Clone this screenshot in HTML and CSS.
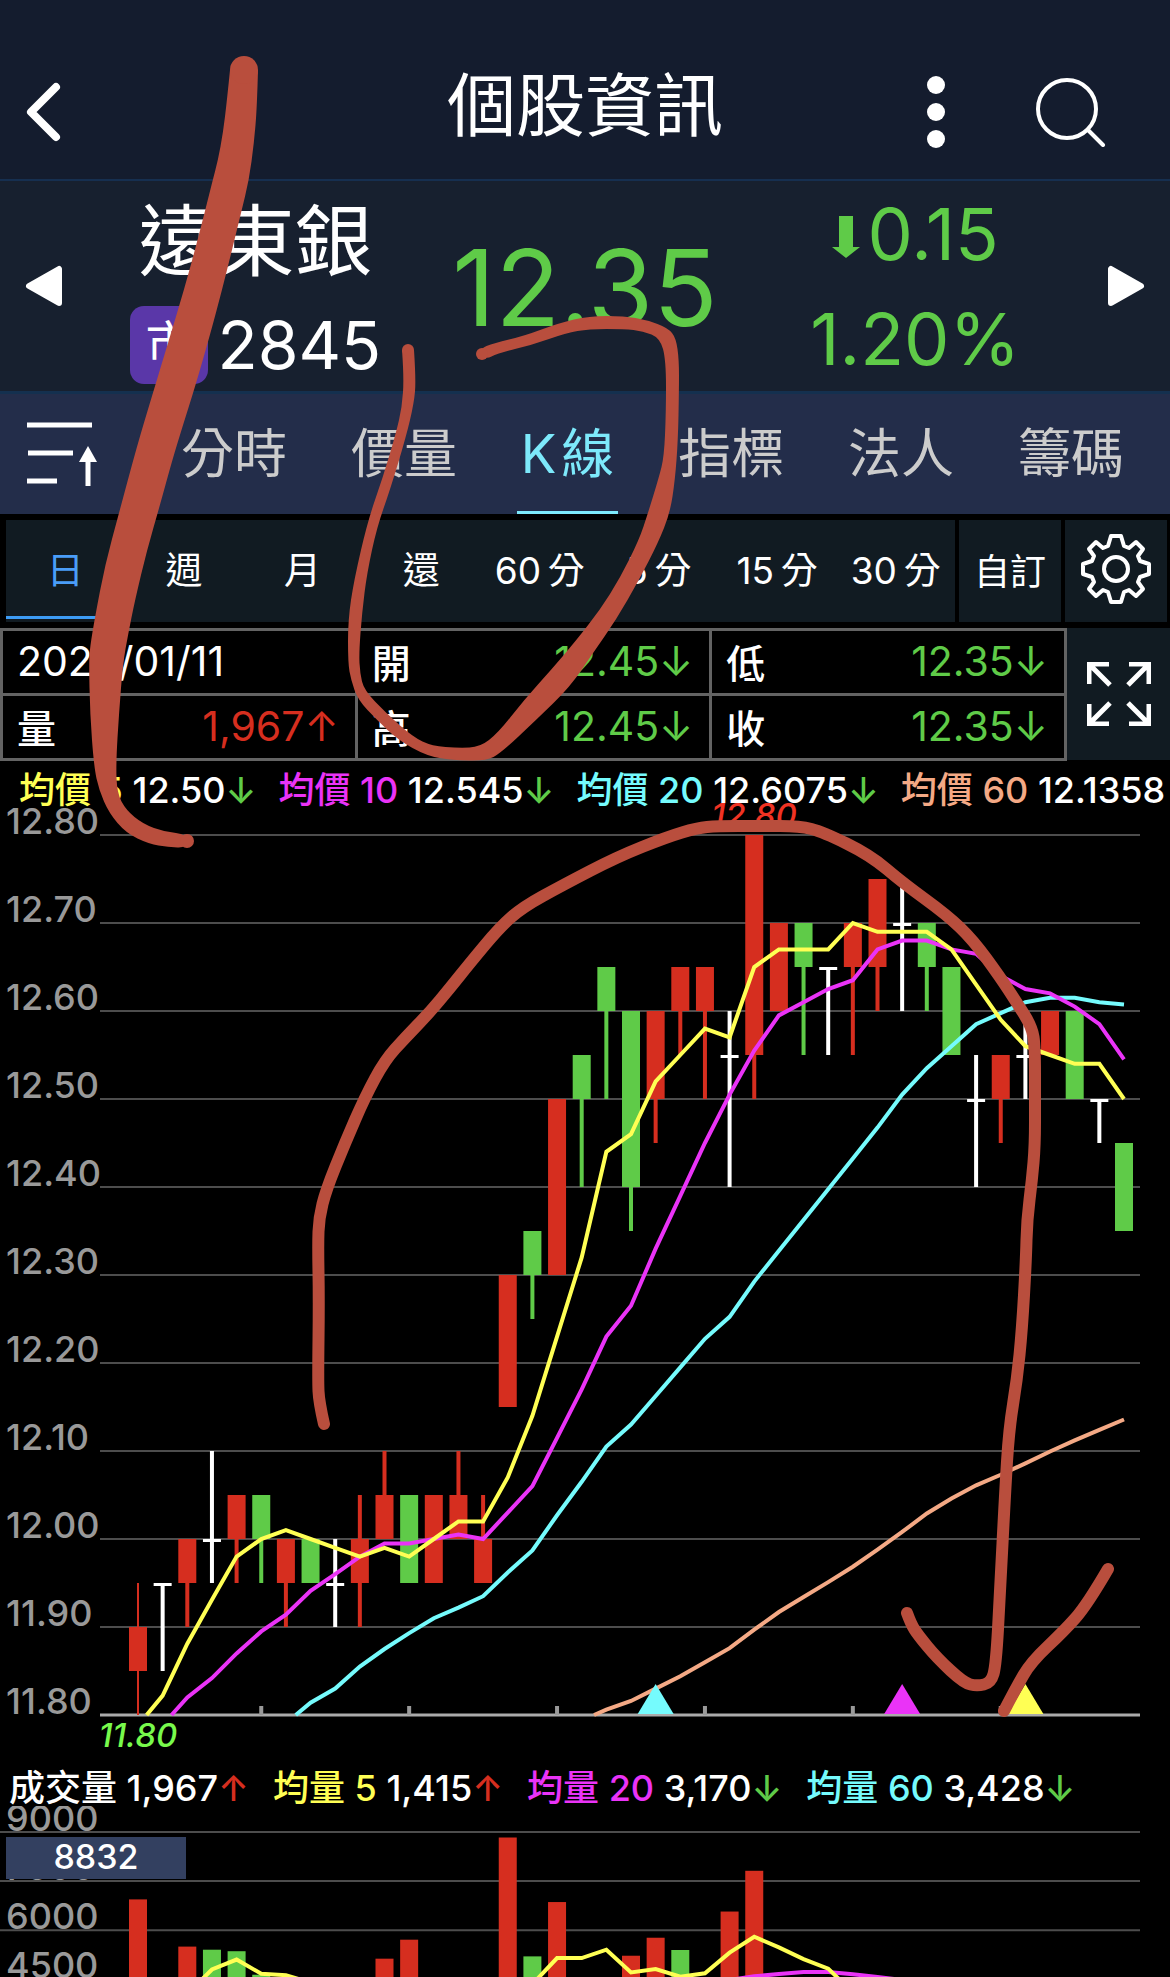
FILE: index.html
```html
<!DOCTYPE html>
<html lang="zh-Hant">
<head>
    <meta charset="utf-8">
    <meta name="viewport" content="width=device-width, initial-scale=1">
    <title>個股資訊</title>
    <link rel="stylesheet" href="styles.css">
</head>
<body>
    <div class="page">
        <header class="topbar">
            <button class="icon-btn" aria-label="返回">
                <svg width="36" height="60" viewBox="0 0 36 60"><path d="M30 5 L5 30 L30 55" fill="none" stroke="#fff" stroke-width="8" stroke-linecap="round" stroke-linejoin="round"/></svg>
            </button>
            <h1>個股資訊</h1>
            <div class="topbar-actions">
                <button class="icon-btn" aria-label="更多">
                    <svg width="18" height="72" viewBox="0 0 18 72" fill="#fff"><circle cx="9" cy="9" r="9"/><circle cx="9" cy="36" r="9"/><circle cx="9" cy="63" r="9"/></svg>
                </button>
                <button class="icon-btn" aria-label="搜尋">
                    <svg width="70" height="70" viewBox="0 0 70 70" fill="none" stroke="#fff" stroke-width="4" stroke-linecap="round"><circle cx="31" cy="32" r="29"/><path d="M52 53 L67 68"/></svg>
                </button>
            </div>
        </header>

        <section class="quote">
            <button class="icon-btn" aria-label="上一檔">
                <svg width="38" height="42" viewBox="0 0 38 42"><path d="M4 21 L34 4 V38 Z" fill="#fff" stroke="#fff" stroke-width="6" stroke-linejoin="round"/></svg>
            </button>
            <div class="stock">
                <div class="stock-name">遠東銀</div>
                <div class="stock-code"><span class="market">市</span>2845</div>
            </div>
            <div class="price">12.35</div>
            <div class="change">
                <div class="change-line"><svg width="28" height="48" viewBox="0 0 28 48"><path d="M7 6 H21 V37 H28 L14 48 L0 37 H7 Z" fill="#5fcb48"/></svg>0.15</div>
                <div class="change-line">1.20%</div>
            </div>
            <button class="icon-btn" aria-label="下一檔">
                <svg width="38" height="42" viewBox="0 0 38 42"><path d="M34 21 L4 4 V38 Z" fill="#fff" stroke="#fff" stroke-width="6" stroke-linejoin="round"/></svg>
            </button>
        </section>

        <nav class="tabs">
            <button class="icon-btn" aria-label="排序">
                <svg width="72" height="64" viewBox="0 0 72 64" fill="none" stroke="#fff" stroke-width="5"><path d="M0 3 H65 M1 31 H46 M0 59 H30 M61 64 V36"/><path d="M61 24 L70 40 H52 Z" fill="#fff" stroke="none"/></svg>
            </button>
            <div class="tab-list">
                <button class="tab">分時</button>
                <button class="tab">價量</button>
                <button class="tab active">K&#8202;線</button>
                <button class="tab">指標</button>
                <button class="tab">法人</button>
                <button class="tab">籌碼</button>
            </div>
        </nav>

        <div class="periods">
            <div class="period-list">
                <button class="period active">日</button>
                <button class="period">週</button>
                <button class="period">月</button>
                <button class="period">還</button>
                <button class="period">60&#8201;分</button>
                <button class="period">5&#8201;分</button>
                <button class="period">15&#8201;分</button>
                <button class="period">30&#8201;分</button>
            </div>
            <button class="period-btn">自訂</button>
            <button class="period-btn" aria-label="設定">
                <svg width="72" height="72" viewBox="-36 -36 72 72" fill="none" stroke="#fff" stroke-width="4" stroke-linejoin="round">
                    <circle r="12"/>
                    <path d="M-5 -33 H5 L8 -23 L13 -21 L20 -27 L27 -20 L22 -13 L24 -8 L33 -5 V5 L24 8 L22 13 L27 20 L20 27 L13 21 L8 23 L5 33 H-5 L-8 23 L-13 21 L-20 27 L-27 20 L-22 13 L-24 8 L-33 5 V-5 L-24 -8 L-22 -13 L-27 -20 L-20 -27 L-13 -21 L-8 -23 Z"/>
                </svg>
            </button>
        </div>

        <div class="summary">
            <div class="summary-data">
                <table>
                    <tr>
                        <td><div class="cell">2024/01/11</div></td>
                        <td><div class="cell"><b>開</b><span class="down">12.45↓</span></div></td>
                        <td><div class="cell"><b>低</b><span class="down">12.35↓</span></div></td>
                    </tr>
                    <tr>
                        <td><div class="cell"><b>量</b><span class="up">1,967↑</span></div></td>
                        <td><div class="cell"><b>高</b><span class="down">12.45↓</span></div></td>
                        <td><div class="cell"><b>收</b><span class="down">12.35↓</span></div></td>
                    </tr>
                </table>
            </div>
            <button class="expand" aria-label="全螢幕">
                <svg width="64" height="64" viewBox="0 0 64 64" fill="none" stroke="#fff" stroke-width="5"><path d="M22 2 H2 V22 M2 2 L23 23 M42 2 H62 V22 M62 2 L41 23 M2 42 V62 H22 M2 62 L23 41 M62 42 V62 H42 M62 62 L41 41"/></svg>
            </button>
        </div>

        <div class="legend legend-price">
            <span><i class="c-yellow">均價 5</i> 12.50<em class="down">↓</em></span>
            <span><i class="c-magenta">均價 10</i> 12.545<em class="down">↓</em></span>
            <span><i class="c-cyan">均價 20</i> 12.6075<em class="down">↓</em></span>
            <span><i class="c-orange">均價 60</i> 12.1358</span>
        </div>
        <svg class="chart chart-price" id="price-chart" viewBox="0 0 1170 945"></svg>

        <div class="legend legend-volume">
            <span>成交量 1,967<em class="up">↑</em></span>
            <span><i class="c-yellow">均量 5</i> 1,415<em class="up">↑</em></span>
            <span><i class="c-magenta">均量 20</i> 3,170<em class="down">↓</em></span>
            <span><i class="c-cyan">均量 60</i> 3,428<em class="down">↓</em></span>
        </div>
        <svg class="chart" id="volume-chart" viewBox="0 0 1170 171"></svg>

        <svg class="marker" id="marker" viewBox="0 0 1170 1977" aria-hidden="true"></svg>
    </div>
    <script src="script.js"></script>
</body>
</html>
```

FILE: styles.css
```css
* { box-sizing: border-box; }
body { margin: 0; background: #000; color: #fff; font-family: Inter, "Noto Sans CJK TC", sans-serif; }
button { background: none; border: none; padding: 0; color: inherit; font: inherit; cursor: pointer; }
svg { display: block; }
.page { position: relative; overflow: hidden; }

.up { color: #d62e1f; }
.down { color: #5fcb48; }
.c-yellow { color: #ffff54; }
.c-magenta { color: #ea33f7; }
.c-cyan { color: #75fbfd; }
.c-orange { color: #f4a985; }

.topbar { display: grid; grid-template-columns: 1fr auto 1fr; align-items: center; height: 181px; padding: 44px 64px 0 26px; background: #141c2e; border-bottom: 2px solid #162f50; }
.topbar h1 { margin: 0 0 12px 38px; font-size: 69px; line-height: 80px; font-weight: 400; }
.topbar-actions { display: flex; justify-content: flex-end; align-items: center; gap: 91px; }

.quote { display: grid; grid-template-columns: 38px 4fr 3fr 4fr 38px; align-items: center; justify-items: center; height: 210px; padding: 0 25px; background: #17202f; }
.stock { padding-left: 6px; }
.stock-name { padding-left: 8px; font-size: 78px; line-height: 108px; }
.stock-code { display: flex; align-items: center; gap: 9px; height: 88px; padding-top: 10px; font-size: 66px; line-height: 80px; }
.market { width: 78px; height: 78px; border-radius: 14px; background: #5a37a8; font-size: 48px; line-height: 76px; text-align: center; }
.price { padding-top: 4px; color: #5fcb48; font-size: 106px; line-height: 106px; }
.change { color: #5fcb48; font-size: 72px; }
.change-line { display: flex; align-items: center; justify-content: center; gap: 8px; padding-right: 4px; line-height: 105px; }

.tabs { display: flex; align-items: center; gap: 78px; height: 123px; padding: 0 42px 0 27px; background: #232d4a; border-top: 3px solid #14304f; }
.tab-list { display: flex; flex: 1; justify-content: space-between; height: 120px; }
.tab { padding: 0 4px 6px; border-bottom: 3px solid transparent; color: #ccc; font-size: 53px; }
.tab.active { color: #7de9fb; border-color: #7de9fb; }

.periods { display: flex; gap: 4px; height: 102px; margin: 6px 3px 6px 6px; }
.period-list { display: flex; flex: 1; background: #111b22; }
.period { flex: 1; margin-bottom: 3px; border-bottom: 3px solid transparent; font-size: 37px; white-space: nowrap; }
.period.active { color: #4a9df8; border-color: #3d9cf5; }
.period-btn { display: flex; align-items: center; justify-content: center; width: 102px; padding-bottom: 5px; background: #111b22; font-size: 36px; }

.summary { display: flex; height: 132px; }
.summary-data { flex: 1; }
.summary table { width: 100%; border-collapse: collapse; table-layout: fixed; }
.summary td { padding: 0; border: 3px solid #636363; }
.cell { display: flex; align-items: center; justify-content: space-between; height: 62px; padding: 0 16px 2px 14px; font-size: 41px; }
.cell b { font-size: 39px; font-weight: 500; }
.expand { display: flex; align-items: center; justify-content: center; width: 103px; background: #111b22; }

.legend { position: relative; z-index: 1; display: flex; font-size: 36px; font-weight: 500; white-space: nowrap; }
.legend i, .legend em { font-style: normal; }
.legend-price { gap: 22px; height: 55px; padding: 8px 0 0 19px; line-height: 44px; }
.legend-volume { gap: 24px; height: 46px; padding: 10px 0 0 9px; line-height: 36px; }

.chart { width: 100%; height: auto; font-size: 36px; }
.chart-price { overflow: visible; }
.axis-label { fill: #999; font-weight: 500; }
.extreme { font-size: 33px; font-style: italic; font-weight: 500; }
.volume-tag { fill: #fff; font-size: 34px; font-weight: 500; }

.marker { position: absolute; top: 0; left: 0; z-index: 2; width: 100%; height: auto; pointer-events: none; }
```

FILE: script.js
```js
const RED = '#d62e1f', GREEN = '#5fcb48', WHITE = '#ffffff';
const YELLOW = '#ffff54', MAGENTA = '#ea33f7', CYAN = '#75fbfd', ORANGE = '#f4a985';

// open, high, low, close
const candles = [
    [11.85, 11.95, 11.80, 11.90], [11.95, 11.95, 11.85, 11.95], [11.95, 12.00, 11.90, 12.00],
    [12.00, 12.10, 11.95, 12.00], [12.00, 12.05, 11.95, 12.05], [12.05, 12.05, 11.95, 12.00],
    [11.95, 12.00, 11.90, 12.00], [12.00, 12.00, 11.95, 11.95], [11.95, 12.00, 11.90, 11.95],
    [11.95, 12.05, 11.90, 12.00], [12.00, 12.10, 12.00, 12.05], [12.05, 12.05, 11.95, 11.95],
    [11.95, 12.05, 11.95, 12.05], [12.00, 12.10, 12.00, 12.05], [11.95, 12.05, 11.95, 12.00],
    [12.15, 12.30, 12.15, 12.30], [12.35, 12.35, 12.25, 12.30], [12.30, 12.50, 12.30, 12.50],
    [12.55, 12.55, 12.40, 12.50], [12.65, 12.65, 12.50, 12.60], [12.60, 12.60, 12.35, 12.40],
    [12.50, 12.60, 12.45, 12.60], [12.60, 12.65, 12.55, 12.65], [12.60, 12.65, 12.50, 12.65],
    [12.55, 12.60, 12.40, 12.55], [12.55, 12.80, 12.50, 12.80], [12.60, 12.70, 12.60, 12.70],
    [12.70, 12.70, 12.55, 12.65], [12.65, 12.65, 12.55, 12.65], [12.65, 12.70, 12.55, 12.70],
    [12.65, 12.75, 12.60, 12.75], [12.70, 12.75, 12.60, 12.70], [12.70, 12.70, 12.60, 12.65],
    [12.65, 12.65, 12.55, 12.55], [12.50, 12.55, 12.40, 12.50], [12.50, 12.55, 12.45, 12.55],
    [12.55, 12.60, 12.50, 12.55], [12.55, 12.60, 12.55, 12.60], [12.60, 12.60, 12.50, 12.50],
    [12.50, 12.50, 12.45, 12.50], [12.45, 12.45, 12.35, 12.35]
];

// first points of the averages, which reach back before the first visible day
const ma5Head = [[0.35, 11.8], [1, 11.822], [2, 11.881], [3, 11.931]];
const ma10Head = [[1.36, 11.8], [2, 11.82], [3, 11.842], [4, 11.87], [5, 11.895], [6, 11.914], [7, 11.941], [8, 11.96]];
const ma20Head = [[6.4, 11.8], [7, 11.814], [8, 11.83], [9, 11.855], [10, 11.875], [11, 11.893], [12, 11.91], [13, 11.922], [14, 11.935], [15, 11.962], [16, 11.987], [17, 12.027], [18, 12.065]];
const ma60 = [11.806, 11.816, 11.83, 11.844, 11.86, 11.876, 11.897, 11.917, 11.934, 11.951, 11.9685, 11.988, 12.008, 12.029, 12.046, 12.061, 12.073, 12.086, 12.0995, 12.112, 12.124, 12.1358];

const volumes = {
    0: [6941, RED], 2: [5499, RED], 3: [5404, GREEN], 4: [5358, GREEN], 5: [4640, GREEN],
    10: [5130, RED], 11: [5710, RED], 15: [8832, RED], 16: [5200, GREEN], 17: [6860, RED],
    20: [5220, RED], 21: [5770, RED], 22: [5395, GREEN], 24: [6570, RED], 25: [7815, RED]
};
const volumeMa5 = [
    [[2.6, 4500], [3, 4800], [4, 5103], [5, 4670], [6, 4625], [7, 4400]],
    [[16, 4350], [17, 5150], [18, 5150], [19, 5405], [20, 4710], [21, 4812], [22, 4580], [23, 4683], [24, 5313], [25, 5800], [26, 5475], [27, 5115], [28, 4825], [29, 4100]]
];
const volumeMa20 = [[24, 4480], [25, 4590], [26, 4660], [27, 4720], [28, 4720], [29, 4655], [30, 4570], [31, 4480]];

const x = i => 138 + i * 24.65;
const priceY = p => 20 + (12.8 - p) * 880;
const volumeY = v => 26 + (9000 - v) * 49.1 / 1500;

const rect = (x, y, w, h, fill) => `<rect x="${x}" y="${y}" width="${w}" height="${h}" fill="${fill}"/>`;
const line = (x1, y1, x2, y2, color, w) => `<line x1="${x1}" y1="${y1}" x2="${x2}" y2="${y2}" stroke="${color}" stroke-width="${w}"/>`;
const polyline = (points, toY, color) =>
    `<polyline points="${points.map(([i, v]) => x(i) + ',' + toY(v)).join(' ')}" fill="none" stroke="${color}" stroke-width="4"/>`;

function average(days) {
    const points = [];
    for (let i = days - 1; i < candles.length; i++) {
        const sum = candles.slice(i - days + 1, i + 1).reduce((s, c) => s + c[3], 0);
        points.push([i, sum / days]);
    }
    return points;
}

function drawPriceChart() {
    let out = '';
    for (let i = 0; i <= 10; i++) {
        const y = 20 + i * 88;
        out += line(100, y, 1140, y, i === 10 ? '#aaaaaa' : '#4d4d4d', i === 10 ? 3 : 2);
        out += `<text class="axis-label" x="6" y="${y - 1}">${(12.8 - i / 10).toFixed(2)}</text>`;
    }
    for (let i = 5; i < 40; i += 6) out += line(x(i), 891, x(i), 900, '#999999', 4);

    candles.forEach(([open, high, low, close], i) => {
        const color = close > open ? RED : close < open ? GREEN : WHITE;
        out += line(x(i), priceY(high), x(i), priceY(low), color, i === 0 ? 2 : 4);
        if (open === close) out += rect(x(i) - 9, priceY(close), 18, 3, color);
        else out += rect(x(i) - 9, priceY(Math.max(open, close)), 18, Math.abs(close - open) * 880, color);
    });

    out += polyline([[18.5, 11.8]].concat(ma60.map((v, i) => [i + 19, v])), priceY, ORANGE);
    out += polyline(ma20Head.concat(average(20)), priceY, CYAN);
    out += polyline(ma10Head.concat(average(10)), priceY, MAGENTA);
    out += polyline(ma5Head.concat(average(5)), priceY, YELLOW);

    [[21, CYAN], [31, MAGENTA], [36, YELLOW]].forEach(([i, color]) => {
        out += `<path d="M${x(i)} 869 L${x(i) + 18} 899 H${x(i) - 18} Z" fill="${color}"/>`;
    });
    out += `<text class="extreme" x="${x(25)}" y="12" text-anchor="middle" fill="#f03323">12.80</text>`;
    out += `<text class="extreme" x="${x(0)}" y="932" text-anchor="middle" fill="#78fa4c">11.80</text>`;
    document.getElementById('price-chart').innerHTML = out;
}

function drawVolumeChart() {
    let out = '';
    for (let v = 9000; v >= 4500; v -= 1500) {
        const y = volumeY(v);
        out += line(0, y, 1140, y, '#4d4d4d', 2);
        out += `<text class="axis-label" x="6" y="${y - 1}">${v}</text>`;
    }
    for (const i in volumes) {
        const [v, color] = volumes[i];
        out += rect(x(Number(i)) - 9, volumeY(v), 18, 200, color);
    }
    out += polyline(volumeMa20, volumeY, MAGENTA);
    volumeMa5.forEach(part => out += polyline(part, volumeY, YELLOW));
    out += rect(6, 31, 180, 42, '#334060');
    out += '<text class="volume-tag" x="96" y="63" text-anchor="middle">8832</text>';
    document.getElementById('volume-chart').innerHTML = out;
}

// hand-drawn pen marks
function smooth(points) {
    let d = `M${points[0]}`;
    for (let i = 1; i < points.length - 1; i++) {
        const [px, py] = points[i], [nx, ny] = points[i + 1];
        d += i === points.length - 2 ? ` Q${px} ${py} ${nx} ${ny}` : ` Q${px} ${py} ${(px + nx) / 2} ${(py + ny) / 2}`;
    }
    return d;
}

function drawMarker() {
    const pen = '#b94e3d';
    const shapes = [
        // long stroke on the left
        [[230, 70], [227, 100], [223, 133], [218, 160], [212, 183], [199, 235], [184, 290], [168, 343], [152, 396], [137, 446], [119, 513], [105, 565], [95, 617], [90, 647], [89, 663], [90, 713], [94, 767], [99, 790], [109, 813], [126, 833], [149, 844], [168, 847], [187, 848],
         [187, 834], [165, 832], [143, 824], [126, 810], [117, 793], [116, 763], [119, 713], [123, 663], [128, 635], [135, 600], [147, 550], [160, 505], [172, 461], [183, 425], [195, 387], [210, 335], [222, 290], [232, 250], [241, 213], [249, 180], [254, 143], [257, 107], [258, 70]],
        // loop round the K line tab
        [[402, 350], [404, 377], [402, 407], [396, 433], [383, 477], [368, 520], [354, 580], [348, 620], [348, 663], [351, 680], [358, 700], [377, 720], [398, 740], [427, 756], [452, 760], [486, 761], [501, 753], [536, 720], [570, 687], [593, 653], [616, 620], [639, 580], [658, 543], [670, 513], [675, 480], [678, 440], [679, 390], [679, 360], [676, 338], [668, 328], [647, 320], [624, 316], [589, 316], [559, 323], [524, 336], [494, 343], [479, 349],
         [485, 360], [498, 353], [532, 345], [566, 333], [589, 329], [624, 329], [643, 331], [660, 338], [666, 360], [666, 413], [664, 457], [659, 477], [648, 513], [639, 540], [620, 578], [600, 610], [574, 643], [551, 670], [524, 700], [498, 733], [480, 747], [459, 748], [432, 746], [413, 737], [386, 713], [364, 690], [360, 673], [359, 653], [362, 613], [367, 573], [377, 527], [390, 490], [406, 437], [414, 403], [416, 380], [414, 350]]
    ];
    const strokes = [
        [[324, 1424], [319, 1402], [318, 1380], [319, 1300], [318, 1245], [319, 1218], [326, 1190], [345, 1143], [365, 1097], [385, 1060], [405, 1038], [430, 1012], [450, 988], [470, 963], [500, 927], [523, 907], [563, 885], [617, 857], [667, 837], [697, 828], [717, 826], [760, 826], [800, 826], [823, 832], [870, 855], [903, 883], [947, 915], [973, 940], [1000, 977], [1017, 1003], [1032, 1027], [1035, 1047], [1035, 1100], [1035, 1145], [1032, 1180], [1027, 1220], [1026, 1260], [1022, 1330], [1017, 1380], [1009, 1429], [1005, 1494], [1000, 1593], [996, 1665], [991, 1683], [977, 1686], [964, 1683], [937, 1658], [918, 1635], [911, 1624], [907, 1613]],
        [[1108, 1569], [1087, 1605], [1064, 1631], [1031, 1662], [1016, 1688], [1004, 1711]]
    ];
    let out = '';
    shapes.forEach(s => out += `<path d="${smooth(s)} Z" fill="${pen}"/>`);
    strokes.forEach(s => out += `<path d="${smooth(s)}" fill="none" stroke="${pen}" stroke-width="12" stroke-linecap="round"/>`);
    [[244, 70, 14], [187, 841, 7], [408, 350, 6], [482, 354, 6]].forEach(([cx, cy, r]) => {
        out += `<circle cx="${cx}" cy="${cy}" r="${r}" fill="${pen}"/>`;
    });
    document.getElementById('marker').innerHTML = out;
}

drawPriceChart();
drawVolumeChart();
drawMarker();
```
